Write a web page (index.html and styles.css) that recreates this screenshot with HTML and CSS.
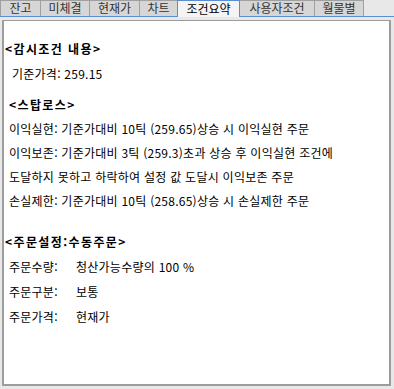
FILE: index.html
```html
<!DOCTYPE html>
<html lang="ko">
<head>
<meta charset="utf-8">
<link rel="stylesheet" href="styles.css">
</head>
<body>
<div class="tabs">
  <div class="tab w40">잔고</div>
  <div class="tab w49">미체결</div>
  <div class="tab w50">현재가</div>
  <div class="tab w38">차트</div>
  <div class="tab active w63">조건요약</div>
  <div class="tab w74">사용자조건</div>
  <div class="tab w50">월물별</div>
</div>
<div class="panel">
  <div class="line head h1">&lt;감시조건 내용&gt;</div>
  <div class="line base">기준가격: 259.15</div>
  <div class="line head h2">&lt;스탑로스&gt;</div>
  <div class="line item">이익실현: 기준가대비 10틱 (259.65)상승 시 이익실현 주문</div>
  <div class="line item">이익보존: 기준가대비 3틱 (259.3)초과 상승 후 이익실현 조건에</div>
  <div class="line item">도달하지 못하고 하락하여 설정 값 도달시 이익보존 주문</div>
  <div class="line item">손실제한: 기준가대비 10틱 (258.65)상승 시 손실제한 주문</div>
  <div class="line head h3">&lt;주문설정:수동주문&gt;</div>
  <div class="line order"><span class="lbl">주문수량:</span>청산가능수량의 100 %</div>
  <div class="line order"><span class="lbl">주문구분:</span>보통</div>
  <div class="line order"><span class="lbl">주문가격:</span>현재가</div>
</div>
</body>
</html>
```
FILE: styles.css
```css
html, body {
  margin: 0;
  padding: 0;
  background: #e8e8e8;
  width: 394px;
  height: 389px;
  overflow: hidden;
  font-family: "Noto Sans CJK KR", "Noto Sans", sans-serif;
  font-size: 12px;
  color: #000;
}
.tabs {
  display: flex;
  height: 16px;
  border-bottom: 1px solid #5a8ed0;
}
.tab {
  box-sizing: border-box;
  height: 16px;
  border: 1px solid #a0a0a0;
  border-bottom: none;
  border-right: none;
  background: #d6d6d6;
  color: #333;
  text-align: center;
  line-height: 14px;
  font-size: 12px;
}
.tab.w50:last-child { border-right: 1px solid #a0a0a0; }
.tab.active {
  height: 17px;
  border: 1px solid #5a8ed0;
  border-bottom: none;
  background: #f4f4f4;
  color: #000;
  line-height: 15px;
  margin-bottom: -1px;
}
.tab.active + .tab { border-left: none; }
.w40 { width: 40px; }
.w49 { width: 49px; }
.w50 { width: 50px; }
.w38 { width: 38px; }
.w63 { width: 63px; }
.w74 { width: 74px; }
.panel {
  box-sizing: border-box;
  margin: 3px 0 0 2px;
  width: 389px;
  height: 366px;
  background: #fff;
  border: 1px solid #9c9c9c;
  border-left-width: 2px;
  border-right-width: 2px;
  border-bottom-width: 2px;
  padding: 15px 0 0 1px;
  letter-spacing: 0.25px;
}
.line {
  height: 25px;
  line-height: 25px;
  white-space: nowrap;
}
.head { font-weight: bold; letter-spacing: 1.4px; }
.base { padding-left: 7px; }
.h2 { margin-top: 6px; padding-left: 4px; }
.h3 { margin-top: 16px; }
.item { padding-left: 4px; height: 24px; line-height: 24px; }
.order { padding-left: 4px; }
.lbl { display: inline-block; width: 67px; }
```
